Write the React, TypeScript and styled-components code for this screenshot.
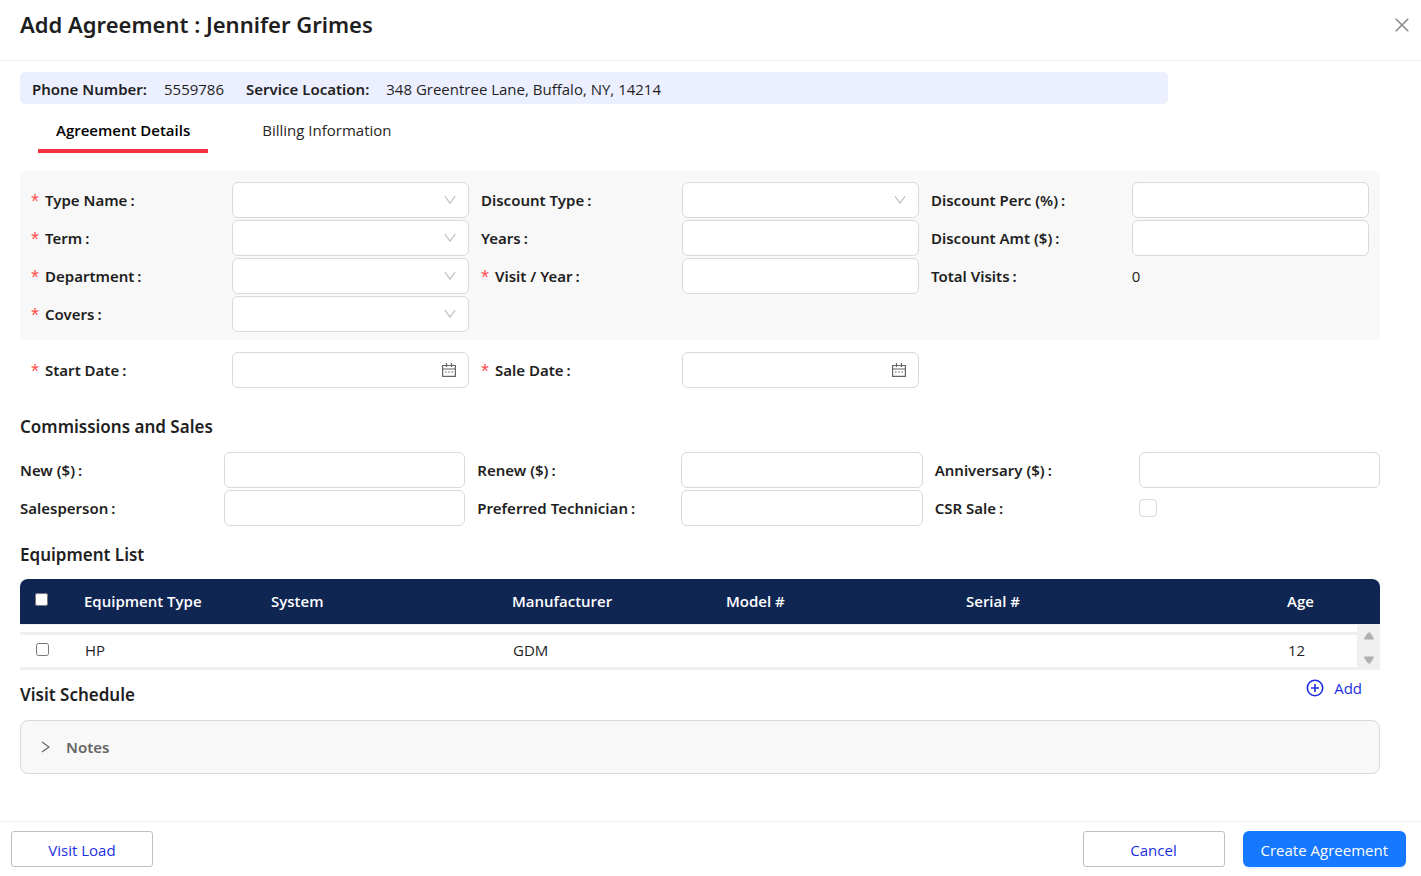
import React from 'react';
import styled, { createGlobalStyle, css } from 'styled-components';

const strongText = css`
  font-family: "Noto Sans", "Open Sans", sans-serif;
  font-weight: 600;
`;

const GlobalStyle = createGlobalStyle`
  *, *::before, *::after { box-sizing: border-box; }
  body {
    margin: 0;
    background: #fff;
    color: #1f1f1f;
    font-family: "Open Sans", "Noto Sans", sans-serif;
    font-size: 15px;
    line-height: 24px;
  }
  button, input, select { font: inherit; color: inherit; }
`;

const Page = styled.div`
  display: flex;
  flex-direction: column;
  min-height: 100vh;
`;

const Header = styled.header`
  display: flex;
  align-items: flex-start;
  justify-content: space-between;
  padding: 8px 10px 18px 20px;
  border-bottom: 1px solid #f0f0f0;
`;

const Title = styled.h1`
  ${strongText}
  margin: 0;
  font-size: 22px;
  line-height: 32px;
`;

const CloseButton = styled.button`
  display: flex;
  align-items: center;
  justify-content: center;
  width: 18px;
  height: 34px;
  padding: 0;
  border: 0;
  background: none;
  color: #8c8c8c;
  cursor: pointer;
`;

const Body = styled.main`
  flex: 1;
  padding: 11px 41px 24px 20px;
`;

const InfoBar = styled.dl`
  display: flex;
  align-items: center;
  height: 32px;
  margin: 0 212px 0 0;
  padding: 2px 12px 0;
  border-radius: 5px;
  background: #ecefff;
`;

const InfoTerm = styled.dt`
  ${strongText}
  margin-right: 17px;
`;

const InfoValue = styled.dd`
  margin: 0 22px 0 0;
`;

const Tabs = styled.div`
  display: flex;
  gap: 36px;
  margin: 0 18px 18px;
`;

const Tab = styled.button<{ $active?: boolean }>`
  height: 49px;
  padding: 6px 18px 0;
  border: 0;
  border-bottom: 4px solid ${(p) => (p.$active ? '#f5313f' : 'transparent')};
  background: none;
  color: ${(p) => (p.$active ? '#000' : '#262626')};
  font-weight: ${(p) => (p.$active ? 600 : 400)};
  cursor: pointer;
`;

const FieldGrid = styled.div<{ $variant?: 'panel' | 'inset' }>`
  display: grid;
  grid-template-columns: repeat(3, minmax(0, 1fr));
  grid-auto-rows: 36px;
  gap: 2px 12px;
  ${(p) => p.$variant === 'panel' && css`
    padding: 11px 11px 8px;
    border-radius: 5px;
    background: #f8f8f8;
  `}
  ${(p) => p.$variant === 'inset' && css`padding: 12px 11px 8px;`}
`;

const FieldCell = styled.div<{ $column: number }>`
  display: grid;
  grid-template-columns: minmax(0, 11fr) minmax(0, 13fr);
  align-items: center;
  grid-column-start: ${(p) => p.$column};
`;

const Label = styled.label`
  ${strongText}
  display: flex;
  align-items: center;
  height: 24px;
  white-space: nowrap;

  &::after {
    content: ":";
    margin-left: 3px;
  }
`;

const Required = styled.span`
  width: 14px;
  padding-top: 8px;
  color: #ff4d4f;
  font-family: "Liberation Mono", monospace;
  font-size: 20px;
  font-weight: 400;
  line-height: 20px;
  text-indent: -2px;
`;

const boxStyle = css`
  width: 100%;
  height: 36px;
  border: 1px solid #d9d9d9;
  border-radius: 6px;
  background: #fff;
  outline-color: #1677ff;
`;

const TextBox = styled.input`
  ${boxStyle}
  padding: 0 11px;
`;

const SelectBox = styled.select`
  ${boxStyle}
  padding: 0 32px 0 11px;
  appearance: none;
`;

const ControlWrap = styled.div`
  position: relative;
`;

const ControlIcon = styled.span<{ $color: string }>`
  position: absolute;
  top: 0;
  right: 13px;
  display: flex;
  align-items: center;
  height: 35px;
  color: ${(p) => p.$color};
  pointer-events: none;
`;

const RoundedCheck = styled.input`
  width: 18px;
  height: 18px;
  margin: 0;
  border: 1px solid #d9d9d9;
  border-radius: 4px;
  background: #fff;
  appearance: none;

  &:checked { background: #1677ff; }
`;

const SectionTitle = styled.h2`
  ${strongText}
  margin: 0;
  font-size: 17px;
  line-height: 24px;
`;

const Commissions = styled.section`
  padding: 19px 0 17px;
`;

const CommissionGrid = styled(FieldGrid)`
  margin-top: 13px;
`;

const Table = styled.table`
  width: 100%;
  margin-top: 12px;
  border-spacing: 0;
  table-layout: fixed;
`;

const Column = styled.col<{ $width: number }>`
  width: ${(p) => p.$width}px;
`;

const HeadCell = styled.th`
  height: 45px;
  padding: 0 0 2px 14px;
  background: #0f2552;
  color: #fff;
  font-weight: 600;
  text-align: left;

  &:first-child { border-top-left-radius: 8px; }
  &:last-child { border-top-right-radius: 8px; }
`;

const GapCell = styled.td`
  height: 8px;
  padding: 0;
  border-top: 1px solid #f0f0f0;
`;

const Cell = styled.td`
  height: 38px;
  padding: 0 0 2px 15px;
  border: solid #f0f0f0;
  border-width: 3px 0;
`;

const ScrollCell = styled.td`
  padding: 0;
  background: #f0f0f0;
`;

const ScrollTrack = styled.div`
  display: flex;
  flex-direction: column;
  align-items: center;
  justify-content: space-between;
  height: 46px;
  padding: 8px 0 6px;
`;

const RowCheck = styled.input`
  display: block;
  width: 13px;
  height: 13px;
  margin: 0 0 2px 1px;
`;

const ScheduleBar = styled.div`
  display: flex;
  align-items: flex-start;
  justify-content: space-between;
  height: 50px;
  padding-right: 18px;
`;

const ScheduleTitle = styled(SectionTitle)`
  padding-top: 13px;
`;

const AddButton = styled.button`
  display: flex;
  align-items: center;
  gap: 10px;
  margin-top: 6px;
  padding: 0;
  border: 0;
  background: none;
  color: #1c2fe0;
  cursor: pointer;
`;

const NotesPanel = styled.button`
  ${strongText}
  display: flex;
  align-items: center;
  gap: 16px;
  width: 100%;
  height: 54px;
  padding: 0 20px;
  border: 1px solid #d9d9d9;
  border-radius: 8px;
  background: #f8f8f8;
  color: #666;
  cursor: pointer;
`;

const Footer = styled.footer`
  display: flex;
  align-items: center;
  justify-content: space-between;
  height: 55px;
  padding: 0 15px 0 11px;
  border-top: 1px solid #f0f0f0;
`;

const FooterActions = styled.div`
  display: flex;
  align-items: center;
  gap: 18px;
`;

const OutlineButton = styled.button`
  width: 142px;
  height: 36px;
  padding: 2px 0 0;
  border: 1px solid #bfbfbf;
  border-radius: 3px;
  background: #fff;
  color: #1c2fe0;
  cursor: pointer;
`;

const PrimaryButton = styled.button`
  height: 36px;
  padding: 2px 18px 0;
  border: 0;
  border-radius: 6px;
  background: #1677ff;
  box-shadow: 0 2px 0 rgba(5, 145, 255, 0.1);
  color: #fff;
  cursor: pointer;
`;

const CloseIcon = () => (
  <svg width="14" height="14" viewBox="0 0 14 14" fill="none" stroke="currentColor" strokeWidth="1.6" aria-hidden="true">
    <path d="M.7.7l12.6 12.6M13.3.7L.7 13.3" />
  </svg>
);

const DownIcon = () => (
  <svg width="12" height="10" viewBox="0 0 12 10" fill="none" stroke="currentColor" strokeWidth="1.2" aria-hidden="true">
    <path d="M.8 1L6 8.2L11.2 1" />
  </svg>
);

const RightIcon = () => (
  <svg width="9" height="12" viewBox="0 0 9 12" fill="none" stroke="currentColor" strokeWidth="1.2" aria-hidden="true">
    <path d="M1 .9L8 6L1 11.1" />
  </svg>
);

const CalendarIcon = () => (
  <svg width="14" height="14" viewBox="0 0 14 14" fill="none" stroke="currentColor" aria-hidden="true">
    <path d="M.6 2.5H13.4V13.3H.6ZM.6 6H13.4" strokeWidth="1.2" />
    <path d="M4.5 0V4M9.5 0V4" strokeWidth="1.2" />
    <path d="M3 9H4.6M6.2 9H7.8M9.4 9H11" strokeWidth="1.2" />
  </svg>
);

const PlusCircleIcon = () => (
  <svg width="18" height="18" viewBox="0 0 18 18" fill="none" stroke="currentColor" strokeWidth="1.6" aria-hidden="true">
    <circle cx="9" cy="9" r="7.7" />
    <path d="M9 5v8M5 9h8" />
  </svg>
);

const ScrollArrow = ({ down }: { down?: boolean }) => (
  <svg width="10" height="8" viewBox="0 0 10 8" fill="#b0b0b0" aria-hidden="true">
    <path d={down ? 'M.3 .6H9.7V2L6 7.4H4L.3 2Z' : 'M.3 7.4H9.7V6L6 .6H4L.3 6Z'} />
  </svg>
);

type Kind = 'select' | 'text' | 'date' | 'check' | 'value';

interface FieldProps {
  id: string;
  label: string;
  column: number;
  kind?: Kind;
  required?: boolean;
  value?: string;
}

const Control = ({ id, kind, value }: { id: string; kind: Kind; value?: string }) => {
  switch (kind) {
    case 'select':
      return (
        <ControlWrap>
          <SelectBox id={id} defaultValue=""><option value="" /></SelectBox>
          <ControlIcon $color="#bfbfbf"><DownIcon /></ControlIcon>
        </ControlWrap>
      );
    case 'date':
      return (
        <ControlWrap>
          <TextBox id={id} type="text" />
          <ControlIcon $color="#666"><CalendarIcon /></ControlIcon>
        </ControlWrap>
      );
    case 'check':
      return <RoundedCheck id={id} type="checkbox" />;
    case 'value':
      return <output id={id}>{value}</output>;
    default:
      return <TextBox id={id} type="text" />;
  }
};

const Field = ({ id, label, column, kind = 'text', required, value }: FieldProps) => (
  <FieldCell $column={column}>
    <Label htmlFor={id}>
      {required && <Required>*</Required>}
      {label}
    </Label>
    <Control id={id} kind={kind} value={value} />
  </FieldCell>
);

const detailFields: FieldProps[] = [
  { id: 'type-name', label: 'Type Name', column: 1, kind: 'select', required: true },
  { id: 'discount-type', label: 'Discount Type', column: 2, kind: 'select' },
  { id: 'discount-perc', label: 'Discount Perc (%)', column: 3 },
  { id: 'term', label: 'Term', column: 1, kind: 'select', required: true },
  { id: 'years', label: 'Years', column: 2 },
  { id: 'discount-amt', label: 'Discount Amt ($)', column: 3 },
  { id: 'department', label: 'Department', column: 1, kind: 'select', required: true },
  { id: 'visit-year', label: 'Visit / Year', column: 2, required: true },
  { id: 'total-visits', label: 'Total Visits', column: 3, kind: 'value', value: '0' },
  { id: 'covers', label: 'Covers', column: 1, kind: 'select', required: true },
];

const dateFields: FieldProps[] = [
  { id: 'start-date', label: 'Start Date', column: 1, kind: 'date', required: true },
  { id: 'sale-date', label: 'Sale Date', column: 2, kind: 'date', required: true },
];

const commissionFields: FieldProps[] = [
  { id: 'new', label: 'New ($)', column: 1 },
  { id: 'renew', label: 'Renew ($)', column: 2 },
  { id: 'anniversary', label: 'Anniversary ($)', column: 3 },
  { id: 'salesperson', label: 'Salesperson', column: 1 },
  { id: 'technician', label: 'Preferred Technician', column: 2 },
  { id: 'csr-sale', label: 'CSR Sale', column: 3, kind: 'check' },
];

const columns = [
  { title: 'Equipment Type', width: 187, value: 'HP' },
  { title: 'System', width: 241, value: '' },
  { title: 'Manufacturer', width: 214, value: 'GDM' },
  { title: 'Model #', width: 240, value: '' },
  { title: 'Serial #', width: 321, value: '' },
  { title: 'Age', width: 84, value: '12' },
];

const renderFields = (fields: FieldProps[]) => fields.map((f) => <Field key={f.id} {...f} />);

export default function App() {
  return (
    <Page>
      <GlobalStyle />
      <Header>
        <Title>Add Agreement : Jennifer Grimes</Title>
        <CloseButton type="button" aria-label="Close"><CloseIcon /></CloseButton>
      </Header>
      <Body>
        <InfoBar>
          <InfoTerm>Phone Number:</InfoTerm>
          <InfoValue>5559786</InfoValue>
          <InfoTerm>Service Location:</InfoTerm>
          <InfoValue>348 Greentree Lane, Buffalo, NY, 14214</InfoValue>
        </InfoBar>
        <Tabs role="tablist">
          <Tab type="button" role="tab" aria-selected="true" $active>Agreement Details</Tab>
          <Tab type="button" role="tab" aria-selected="false">Billing Information</Tab>
        </Tabs>
        <FieldGrid $variant="panel">{renderFields(detailFields)}</FieldGrid>
        <FieldGrid $variant="inset">{renderFields(dateFields)}</FieldGrid>
        <Commissions>
          <SectionTitle>Commissions and Sales</SectionTitle>
          <CommissionGrid>{renderFields(commissionFields)}</CommissionGrid>
        </Commissions>
        <SectionTitle>Equipment List</SectionTitle>
        <Table>
          <colgroup>
            <Column $width={50} />
            {columns.map((c) => <Column key={c.title} $width={c.width} />)}
            <Column $width={23} />
          </colgroup>
          <thead>
            <tr>
              <HeadCell scope="col"><RowCheck type="checkbox" aria-label="Select all equipment" /></HeadCell>
              {columns.map((c) => <HeadCell key={c.title} scope="col">{c.title}</HeadCell>)}
              <HeadCell aria-hidden="true" />
            </tr>
          </thead>
          <tbody>
            <tr>
              <GapCell colSpan={7} />
              <ScrollCell rowSpan={2}>
                <ScrollTrack><ScrollArrow /><ScrollArrow down /></ScrollTrack>
              </ScrollCell>
            </tr>
            <tr>
              <Cell><RowCheck type="checkbox" aria-label="Select HP" /></Cell>
              {columns.map((c) => <Cell key={c.title}>{c.value}</Cell>)}
            </tr>
          </tbody>
        </Table>
        <ScheduleBar>
          <ScheduleTitle>Visit Schedule</ScheduleTitle>
          <AddButton type="button"><PlusCircleIcon />Add</AddButton>
        </ScheduleBar>
        <NotesPanel type="button" aria-expanded="false"><RightIcon />Notes</NotesPanel>
      </Body>
      <Footer>
        <OutlineButton type="button">Visit Load</OutlineButton>
        <FooterActions>
          <OutlineButton type="button">Cancel</OutlineButton>
          <PrimaryButton type="button">Create Agreement</PrimaryButton>
        </FooterActions>
      </Footer>
    </Page>
  );
}
